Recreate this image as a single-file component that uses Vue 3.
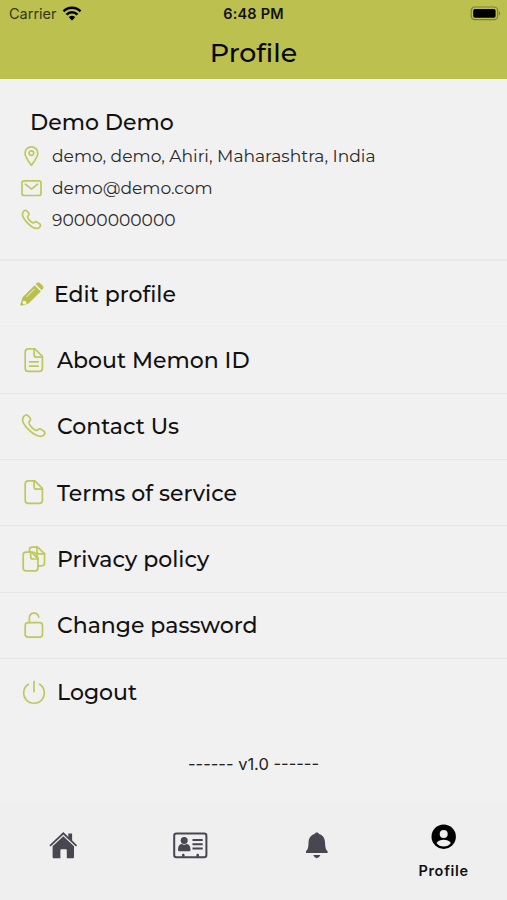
<template>
  <div class="screen">
    <header class="header">
      <div class="status">
        <div class="carrier">
          <span class="carrier-name">Carrier</span>
          <svg class="wifi" width="20" height="16" viewBox="0 0 20 16">
            <path d="M1.5 5.4a12 12 0 0 1 17 0M4.5 8.6a7.700 7.700 0 0 1 11 0" />
            <path class="wifi-dot" d="M6.800 11.200a4.500 4.500 0 0 1 6.400 0l-3.200 3.200z" />
          </svg>
        </div>
        <span class="time">6:48 PM</span>
        <svg class="battery" width="31" height="15" viewBox="0 0 31 15">
          <rect class="battery-case" x="1.200" y="1" width="26.500" height="12.600" rx="3.600" />
          <rect x="3.200" y="2.900" width="22.400" height="8.800" rx="1.800" />
          <path class="battery-tip" d="M29 5v4.600q2.400-2.300 0-4.600z" />
        </svg>
      </div>
      <h1 class="title">Profile</h1>
    </header>

    <section class="user">
      <h2 class="name">Demo Demo</h2>
      <div v-for="info in infos" :key="info.text" class="info">
        <svg class="line-icon" width="22" height="22" viewBox="0 0 22 22">
          <path v-for="d in info.paths" :key="d" :d="d" />
        </svg>
        <span>{{ info.text }}</span>
      </div>
    </section>

    <ul class="menu">
      <li v-for="item in menu" :key="item.text" :class="['item', item.name]">
        <svg :class="item.solid ? 'solid-icon' : 'line-icon'" width="28" height="28" viewBox="0 0 28 28">
          <path v-for="d in item.paths" :key="d" :d="d" />
        </svg>
        <span>{{ item.text }}</span>
      </li>
    </ul>

    <p class="version">------ v1.0 ------</p>

    <nav class="tabs">
      <button class="tab">
        <svg width="30" height="30" viewBox="0 0 30 30">
          <path d="M20.300 2.500h3.800v7.400l-3.800-3.600z" />
          <path class="roof" d="M2 14.900 15.300 2.300l13.200 12.600" />
          <path d="M4.600 15.300 15.300 5.200 26 15.300v11q0 1-1 1h-6.200v-8.200q0-.9-.9-.9h-4.600q-.9 0-.9.9v8.200H5.600q-1 0-1-1z" />
        </svg>
      </button>
      <button class="tab">
        <svg width="36" height="30" viewBox="0 0 36 30">
          <rect class="card" x="2.200" y="2.500" width="32.200" height="23.800" rx="2.200" />
          <circle cx="12.200" cy="9.400" r="3.500" />
          <path d="M6 19q0-5.700 3.600-6.100q2.600 1.500 5.200 0q3.700.4 3.700 6.100q0 1.200-1.200 1.200H7.200Q6 20.200 6 19z" />
          <path class="card-line" d="M20.500 9.100h10.200M20.500 13.300h10.200M20.500 17.600h10.200" />
          <path d="M10 25.700v-2.100l1.300-1 1.300 1v2.100zM24.400 25.700v-2.100l1.300-1 1.300 1v2.100z" />
        </svg>
      </button>
      <button class="tab">
        <svg width="30" height="30" viewBox="0 0 30 30">
          <path d="M14.800 1.500c1.200 0 1.900.7 2.200 1.600 4.200 1.200 6 4.600 6.100 9 .1 4.700.8 6.700 2.500 8.200v1.800H4v-1.800c1.700-1.500 2.400-3.500 2.500-8.200.1-4.400 1.900-7.800 6.100-9 .3-.9 1-1.600 2.200-1.600z" />
          <path d="M11.200 24.100h7.200q-1.200 3.100-3.600 3.100t-3.600-3.100z" />
        </svg>
      </button>
      <button class="tab active">
        <svg width="26" height="26" viewBox="0 0 26 26">
          <circle cx="12.700" cy="12.700" r="12.200" />
          <circle class="face" cx="12.700" cy="9.900" r="4" />
          <path class="face" d="M5.500 19q2.600-3.200 7.200-3.200t7.200 3.200q-2.700 3.500-7.200 3.500T5.500 19z" />
        </svg>
        <span class="tab-label">Profile</span>
      </button>
    </nav>
  </div>
</template>

<script setup>
const infos = [
  {
    text: 'demo, demo, Ahiri, Maharashtra, India',
    paths: [
      'M11.400 20.300C8.400 16.300 5 11.800 5 8.200a6.400 6.400 0 0 1 12.800 0C17.800 11.800 14.400 16.300 11.400 20.300z',
      'M13.700 8.100a2.300 2.300 0 1 1-4.600 0a2.300 2.300 0 1 1 4.600 0z'
    ]
  },
  {
    text: 'demo@demo.com',
    paths: [
      'M4 3.900h15q2 0 2 2v10.600q0 2-2 2H4q-2 0-2-2V5.900q0-2 2-2z',
      'M5.400 7.200l6.100 4.900 6.100-4.900'
    ]
  },
  {
    text: '90000000000',
    paths: [
      'M20.100 16.200c-1-.9-2.200-1.700-3.300-2.300-1.400-.8-2.400.8-3.200 1-.9.200-3.200-1.700-4.400-3C8 10.600 7.500 9.300 7.700 8.600c.2-.8 1.900-1.600 1.200-3C8.300 4.500 7.500 3.500 6.600 2.700c-.8-.8-2.300-.2-3.100.8-1.900 2.200-.8 6.400 3.400 10.800 4.600 4.900 9.400 7.100 12.100 5.400 1.200-.8 2-2.400 1.100-3.500z'
    ]
  }
]

const sheet = 'M8.400 2.900h6.500l7.500 7.500v11.800q0 3.200-3.200 3.200H8.400q-3.200 0-3.200-3.200V6.100q0-3.200 3.200-3.200z'
const fold = 'M14.100 2.900v5.800q0 2.500 2.500 2.500h5.700'

const menu = [
  {
    name: 'edit',
    text: 'Edit profile',
    solid: true,
    paths: [
      'M2.400 17.400 14.600 5.200l6.200 6.200L8.600 23.600 1.600 25.700q-1.200 0-1.200-1.200zM3.300 20.400l-1 2.700 1.500 1.500 2.700-1.200-.5-2.200-2.100-.2zM14.100 8.800 6.500 16.400l.5.500 7.600-7.600z',
      'M15.600 4.100 17.200 2.700q1.400-.9 2.600.2l3.200 3.200q1 1.200.1 2.500L21.700 10.200z'
    ]
  },
  { name: 'about', text: 'About Memon ID', paths: [sheet, fold, 'M9.500 15.800h8.700M9.500 20.200h8.700'] },
  {
    name: 'contact',
    text: 'Contact Us',
    paths: [
      'M24.500 19.900c-1.100-1.100-2.500-2-3.900-2.800-1.600-.9-2.800 1-3.800 1.300-1.100.2-4-2.100-5.500-3.600C9.900 13.200 8.700 11.300 9 10.200c.3-1.100 2.200-2 1.400-3.600C9.600 5.300 8.700 4.200 7.600 3.300c-1-.8-2.800-.3-3.800 1.100-2.300 2.900-.4 8 4.500 12.900 5.400 5.600 11.300 8.200 14.600 6.400 1.700-1 2.600-2.600 1.600-3.800z'
    ]
  },
  { name: 'terms', text: 'Terms of service', paths: [sheet, fold] },
  {
    name: 'privacy',
    text: 'Privacy policy',
    paths: [
      'M6 7.100h5.400l6.600 6.600v9.400q0 2.800-2.800 2.800H6q-2.800 0-2.800-2.800V9.900Q3.200 7.100 6 7.100z',
      'M10.700 7.100v4.900q0 2 2 2h5.200',
      'M9.500 6.900V4.600q0-2.500 2.700-2.500h5.500l6.800 6.500v9.500q0 2.700-2.700 2.700h-3.700',
      'M11.400 7.100c3.500-.6 6.100 2.400 6.600 6.600M16.900 2.100V6.800q0 2 2 2h5.500'
    ]
  },
  {
    name: 'password',
    text: 'Change password',
    paths: [
      'M8.100 11.600h11.500q2.900 0 2.900 2.900v8.700q0 2.900-2.900 2.900H8.100q-2.900 0-2.900-2.900v-8.700q0-2.900 2.900-2.900z',
      'M9.400 11.600V7c0-6.100 8.200-6.700 9.300-.9'
    ]
  },
  {
    name: 'logout',
    text: 'Logout',
    paths: ['M8.400 6.300a10.300 10.300 0 1 0 11.200 0', 'M14 3.400v10.300']
  }
]
</script>

<style>
body {
  margin: 0;
  background: #f1f1f1;
}
</style>

<style scoped>
.screen {
  width: 507px;
  height: 900px;
  display: flex;
  flex-direction: column;
  overflow: hidden;
  background: #f1f1f1;
  color: #111;
  font-family: Montserrat, Inter, "Liberation Sans", sans-serif;
}

.header {
  height: 79px;
  background: #bcc04e;
}
.status {
  height: 27px;
  padding: 0 6px 0 9px;
  display: grid;
  grid-template-columns: 1fr auto 1fr;
  align-items: center;
  font-family: Inter, sans-serif;
  font-size: 14.5px;
}
.carrier {
  display: flex;
  align-items: center;
  gap: 5px;
}
.carrier-name {
  color: #34361b;
}
.wifi {
  fill: none;
  stroke: #000;
  stroke-width: 2.5;
}
.wifi .wifi-dot {
  fill: #000;
  stroke: none;
}
.time {
  margin-right: 3px;
  font-weight: 600;
  letter-spacing: 0.2px;
}
.battery {
  justify-self: end;
}
.battery-case {
  fill: none;
  stroke: #7d8038;
  stroke-width: 1.2;
}
.battery-tip {
  fill: #7d8038;
}
.title {
  margin: 0;
  font-size: 26.8px;
  font-weight: 500;
  line-height: 51px;
  text-align: center;
  color: #080800;
}

.user {
  box-sizing: border-box;
  height: 182px;
  padding: 27px 20px 0;
  border-bottom: 2px solid #e8e8e8;
}
.name {
  margin: 0 0 0 10px;
  font-size: 22px;
  font-weight: 500;
  line-height: 34px;
}
.info {
  height: 31.8px;
  display: flex;
  align-items: center;
  gap: 10px;
  font-size: 17.1px;
  color: #2a2a2a;
  white-space: nowrap;
}
.line-icon,
.solid-icon {
  flex: none;
}
.line-icon {
  fill: none;
  stroke: #bfc85c;
  stroke-width: 1.7;
  stroke-linecap: round;
  stroke-linejoin: round;
}
.solid-icon {
  fill: #b9c04b;
  fill-rule: evenodd;
}

.menu {
  margin: 0;
  padding: 0;
  list-style: none;
}
.item {
  box-sizing: border-box;
  height: 66.35px;
  padding: 1px 0 0 20px;
  display: flex;
  align-items: center;
  gap: 9px;
  border-bottom: 1px solid #e6e6e6;
  font-size: 22px;
  font-weight: 500;
  white-space: nowrap;
}
.item svg {
  margin-bottom: 2px;
}
.item:last-child {
  border-bottom: none;
}
.item.edit {
  gap: 6px;
  border-bottom-color: #ececec;
}
.item.edit svg {
  margin-bottom: 0;
}

.version {
  margin: 23px 0 0;
  font-family: Inter, sans-serif;
  font-size: 16.5px;
  line-height: 32px;
  text-align: center;
  color: #222;
}

.tabs {
  height: 99px;
  margin-top: auto;
  display: grid;
  grid-template-columns: repeat(4, 1fr);
  background: #efefef;
}
.tab {
  padding: 0 0 9px;
  display: flex;
  flex-direction: column;
  align-items: center;
  justify-content: center;
  border: none;
  background: none;
  font-family: Inter, sans-serif;
  color: #111;
  fill: #484650;
}
.tab.active {
  padding: 2px 0 0;
  gap: 12px;
  fill: #000;
}
.roof {
  fill: none;
  stroke: #484650;
  stroke-width: 1.8;
}
.card,
.card-line {
  fill: none;
  stroke: #484650;
  stroke-width: 2;
}
.face {
  fill: #efefef;
}
.tab-label {
  font-size: 14.5px;
  font-weight: 600;
  line-height: 18px;
  letter-spacing: 0.7px;
}
</style>
